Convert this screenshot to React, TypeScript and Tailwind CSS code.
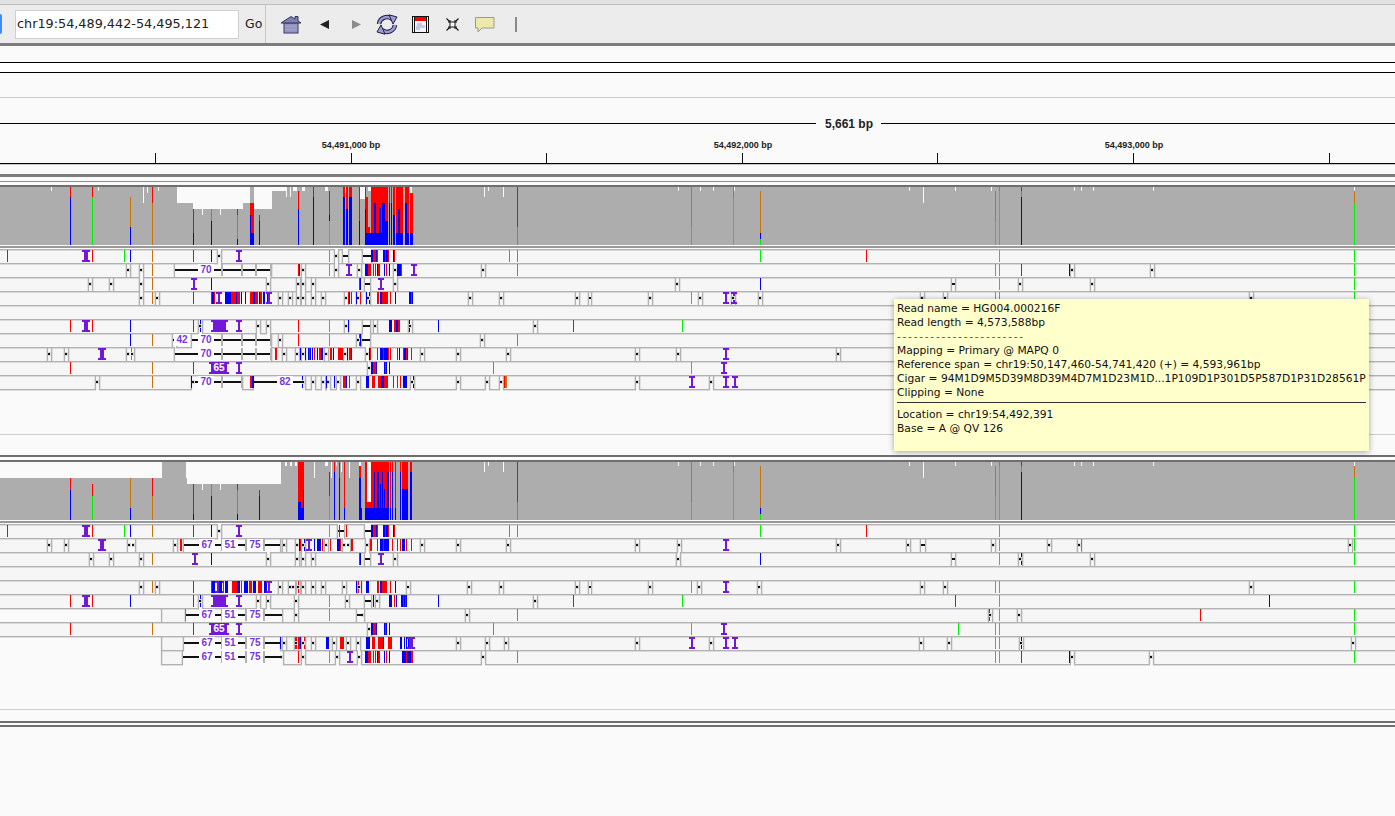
const COLORS: Record<string, string> = {
  r: "#ff0000",
  b: "#0000ff",
  g: "#00f000",
  o: "#c8720a",
  w: "#fafafa",
};
const PURPLE = "#7318d8";
const BOX = "#b2b2b2";

type Row = { marks: string; labels?: [number, string][] };

// ---- read rows, one string per row: r/b/g/o tick, d deletion dot, l black line,
// i/I insertion, P filled insertion, | gray bar, S read start
const panel1Rows: Row[] = [
  { marks: "r7 I86 r92 g124 b130 o152 r193 b211 d219 i239 g329 d336 l343-348 l363-371 b371-373 r373-376 b376-377 r377-378 b383-385 r385-386 b386-388 r388-389 b393-394 r394-395 o509 o517 g760 r866 g999 g1354" },
  { marks: "d128 d141 o152 l175-271 |221 |241 |255 |270 r298 b299 d303 g329 d336 i349 d359 b365-368 r368-371 r373 r375 b377 r378-380 b384 r386 b389 d395 b397-401 r401 i414 d483 o517 g995 g999 r1021 b1069 d1072 d1152 g1354", labels: [[206, "70"]] },
  { marks: "d90 d111 d141 o152 i194 b211 d268 d298 d303 d313 r359 b360 l365-370 i381 r381 d395 d677 b760 l952-955 g999 d1020 d1092 g1354" },
  { marks: "d141 o152 d157 r193 r211 b212-214 r214 i219 b225-231 r231-236 b236 r237-240 b241-242 b245-246 r250-253 b253-255 r255-258 b259-260 r260-262 b263 b264-265 b267 i269 d280 d290 d298 d303 d313 d323 d346 r348 b349-350 r351 b356 d358 r360 b366-367 d368 b369 r377-379 b380-382 r382-385 b385-386 r386-388 r390 b395 b409-411 r411-412 b412-413 d470 d501 d577 l589-591 d650 g691 d700 i726 d733 o733 i734 d760 d922 d945 g995 g999 d1251 g1354" },
  { marks: "" },
  { marks: "r70 I86 r92 b130 r193 d200 b200 P211-228 i239 d258 d268 r298 g329 d346 b348 l363-370 d375 b389-392 r394-396 b396-398 r398-400 b409 d410 b438 d535 r573 g682" },
  { marks: "b130 o152 d174 l192-271 |221 |241 |255 |270 d280 r298 g329 d358 r359 b360 l362-370 d482 o517", labels: [[182, "42"], [206, "70"]] },
  { marks: "d49 d66 I102 d128 d132 o131 l175-271 |221 |241 |255 |270 r275-277 d284 d297 b300 d303 b305 b308 r309 b310 b312 r314 b317-318 r319-321 b321-323 d326 r330-332 b333 r338-343 d345 b347 r349-351 b351 d367 b369 r370-371 r377 b380-383 r383-384 b384-388 r388-389 r390 r397 b399 r403 b404-406 r406 b407-408 r411 d422 d458 d508 d637 d678 i726 d838", labels: [[206, "70"]] },
  { marks: "r70 o152 r193 P209-229 i239 d369 b371-373 r373-376 b376-377 b384 r385 b386 b389 o493 g691 i724", labels: [] },
  { marks: "d97 o152 b191 d193 l195-242 |221 |241 r250-252 b252-254 l254-302 b302 d303 d313 d323 b326 d328 b334 d338 r343-346 b346 r349 d358 b366-369 r372-375 r378-381 b381-384 r384-388 r393 r397 r400 b403-407 d412 b413 d458 d487 d501 r504 o505-507 d637 g691 i692 d711 i726 i735 r735", labels: [[206, "70"], [285, "82"]] },
];

const panel2Rows: Row[] = [
  { marks: "r7 I86 r92 g124 b130 o152 r193 b211 d219 i239 g329 l338-344 r339 r346 l365-371 b371-373 r373-376 b376-377 r377-378 b383-385 r385-386 b386-388 r388-389 b393-394 r394-395 o509 o517 g760 r866 g999 g1354" },
  { marks: "d49 d66 I102 d129 d133 d175 r180-182 l184-280 |221 |245 |263 d284 d297 b299-300 r300-301 d303 b304-305 i309 r309 b314 b317-321 r322 d326 r330 b337-340 r340 d344 d348 r351-353 d367 r370-372 r377 b380-383 r383-384 b384-389 r392 r397 r400 b402-405 r406-407 r411 d422 d458 d508 d637 d679 i726 d838 d908 l921-925 d993 g999 d1049 d1079 o1081 d1350 g1354", labels: [[207, "67"], [230, "51"], [255, "75"]] },
  { marks: "d91 d111 d141 o152 i195 r195 b211 d268 d297 d303 d313 r359 b360 l365-370 i381 d395 d678 b760 l952-955 g999 d1020 b1021 d1092 g1354" },
  { marks: "" },
  { marks: "d141 o152 d157 r193 r211 b212-215 I219 b219-222 r223 b225-228 r232-237 b237-240 r241 b244-248 r249-252 b253-256 r258-262 b264-267 i269 d280 d290 d293 r298 d298 d303 d313 d323 d344 b356 r358 d359 r361 b366-369 r377-379 b380-382 r382-387 r390 b395 d408 d469 d501 d577 l589-591 d650 g691 d699 i726 d759 d922 d945 g995 g999 d1251 g1354" },
  { marks: "r70 I86 r92 b130 r193 d200 b200 P211-228 i239 d258 d268 d296 g329 d347 l365-371 b373 d377 b389-392 r394 b396 b401-407 r403 r405 b438 d535 r573 g682 r955 g999 b1269" },
  { marks: "S161 o185 l186-282 |221 |245 |263 d296 g329 l357-361 d362 d467 o517 r989 d990 g999 d1019 r1200 g1354", labels: [[207, "67"], [230, "51"], [255, "75"]] },
  { marks: "r70 o152 r193 P209-229 i239 d369 b371-373 r373-376 b376-377 b384 r385 b386 b389 o493 g691 i724 g958 g995 g999 g1354" },
  { marks: "S161 l184-280 |221 |245 |263 b280 d284 r295-297 d296 r298-300 b300 d303 r304 d313 b326-329 d334 r340-344 d348 d358 b366-370 r372-375 r378-383 b383 r388-392 b400-402 b404 b406 b408 I411 d458 d487 d506 d637 i692 d711 i726 i735 d921 d949 g995 g999 b1021 d1021 d1353", labels: [[207, "67"], [230, "51"], [255, "75"]] },
  { marks: "S161 l183-280 |221 |245 |263 d281 r298 d303 g329 d337 i350 d359 b365-368 r368-371 r373 r375 b377 r378-380 b384 r386 b389 b402-406 r406 b407-411 r411-413 d483 o517 g995 g999 r1021 b1069 d1072 d1151 g1354", labels: [[207, "67"], [230, "51"], [255, "75"]] },
];

// ---- coverage columns: "x[-x2] c<y0>[-y1] ...", a segment without y1 runs to the next one
const sharedCoverage = [
  "70 r186 b196", "92 r186 g196", "51 w186-190", "98 w186-190", "143 w186-202", "147 w186-192", "158 w186-190",
  "202 w208-214", "220 w208-214", "517 r186 o226", "691 o186 g226", "733 o186 g196", "760 o190 b232 g238",
  "484 w186-196", "488 w186-190", "503 w186-196", "678 w186-190", "700 w186-190", "713 w186-190", "734 w186-190",
  "909 w186-190", "923 w186-202", "955 w186-190", "991 w186-190", "995 o190 g220", "999 o186 g190", "1021 r186 o190 b196",
  "1074 w186-190", "1081 w186-190", "1093 w186-190", "1153 w186-190", "1354 w186-190 o190 g202",
];

const cover1 = [
  ...sharedCoverage,
  "177-193 w186-202", "193-243 w186-208", "243-250 w186-202", "254-272 w186-208", "272-286 w186-190", "286-287 w186-196",
  "290-291 w186-196", "293-297 w186-190", "302-305 w186-190", "325-328 w186-190",
  "130 o196 b226", "152 r186 o202", "193 r208 b232", "211 o208 b220", "237 r208 o214 b238",
  "250 r202 b214", "251-254 r202 b232", "250-254 b232", "259 r214 b220", "298 r190 b208", "313 r186 b196", "329 r190 b214 g220",
  "343-345 r186 b196", "345-346 w186-192", "346-348 r186 b208", "349-352 r186 b196", "351-352 b220",
  "359 r186 b220", "360-365 w186-198", "365-366 r186 b208", "366-368 r196 b232", "368-371 w186-190", "368-370 r226-232", "368-371 b232",
  "371-374 r186 b232", "374-376 r186 b202", "376-379 r186 b232", "379-381 r186 b207", "381-382 r186 b232", "382-385 r186 b202",
  "385-388 r186 b220", "389 r186 b202", "391 r186 b202", "393-395 r186 b214", "396-398 r186 b232", "398-400 r186 b208",
  "400-403 r186 b232", "405-407 r186 b202", "407-409 r186 b232", "410-412 w186-192", "410-413 r192 b232",
];

const cover2 = [
  ...sharedCoverage.filter((c) => !c.startsWith("70 ") && !c.startsWith("92 ")),
  "70 r202 b214", "92 r208 g220",
  "0-162 w186-202", "186-187 w186-202", "187-281 w186-208", "285-287 w186-190", "290-292 w186-190", "295-297 w186-190", "314 w186-202",
  "325-328 w186-190", "331 w186-202", "336 w186-190", "341 w186-196",
  "130 o202 b232", "152 r202 o220", "193 r208 b238", "211 o208 b220", "237 r208 o214 b238", "259 r214 b220",
  "298-301 r186 b226", "301-303 r186 b232", "303 r186 b214", "329 r196 g220", "334 r186 b196", "339 r186 b202",
  "344 r186 b232", "349 w186-202", "359-361 w186-190 r190 b202", "361-362 b232", "365-367 r186 b232", "367-371 w186-226 r226 b232",
  "371-374 r186 b232", "374-375 r186 b196", "375-377 r186 b232", "377-379 r186 b196", "379-380 r186 b232", "380-381 r186 b208",
  "381-382 r186 b232", "382-383 r186 b196", "383-384 r186 b232", "384-385 r186 b213", "385-387 r186 b232", "387-389 r186 b196",
  "390 r186 b232", "392 r186 b196", "395 r186 b232", "400 r186 b196", "402-408 r186 b213", "410-412 r186 b196",
];

function parseCoverage(col: string) {
  const [head, ...segs] = col.split(" ");
  const [a, b] = head.split("-").map(Number);
  const w = b ? b - a : 1;
  return segs.map((s, i) => {
    const [y0, y1] = s.slice(1).split("-").map(Number);
    const next = segs[i + 1] ? Number(segs[i + 1].slice(1).split("-")[0]) : 244;
    return { x: a, w, c: s[0], y0, y1: y1 ?? next };
  });
}

function Coverage({ cols, shift }: { cols: string[]; shift: number }) {
  return (
    <g shapeRendering="crispEdges">
      <rect x={0} y={186 + shift} width={1395} height={58} fill="#adadad" />
      {cols.flatMap(parseCoverage).map((s, i) => (
        <rect key={i} x={s.x} y={s.y0 + shift} width={s.w} height={s.y1 - s.y0} fill={COLORS[s.c]} />
      ))}
    </g>
  );
}

function Insertion({ x, y, wide }: { x: number; y: number; wide?: boolean }) {
  const sw = wide ? 4 : 2;
  const w = wide ? 8 : 6;
  return (
    <>
      <rect x={x - w / 2} y={y} width={w} height={2} fill={PURPLE} />
      <rect x={x - sw / 2} y={y} width={sw} height={12} fill={PURPLE} />
      <rect x={x - w / 2} y={y + 10} width={w} height={2} fill={PURPLE} />
    </>
  );
}

function ReadRow({ row, y }: { row: Row; y: number }) {
  const tokens = row.marks.split(" ").filter(Boolean).map((t) => {
    const [a, b] = t.slice(1).split("-").map(Number);
    return { k: t[0], a, b };
  });
  const start = tokens.find((t) => t.k === "S")?.a ?? -4;
  const breaks = tokens
    .filter((t) => t.k === "d" || t.k === "l")
    .map((t) => (t.k === "d" ? [t.a - 1, t.a + 2] : [t.a, t.b]))
    .sort((p, q) => p[0] - q[0]);

  const boxes: number[][] = [];
  let from = start;
  for (const [p, q] of breaks) {
    if (p > from) boxes.push([from, p]);
    from = Math.max(from, q);
  }
  boxes.push([from, 1400]);

  return (
    <g>
      {boxes.map(([p, q]) => (
        <rect key={p} x={p + 0.6} y={y - 0.3} width={q - p - 1.2} height={14} fill="#f6f6f6" stroke={BOX} strokeWidth={1.4} />
      ))}
      <g shapeRendering="crispEdges">
        {tokens.map((t, i) => {
          if (t.k === "l") return <rect key={i} x={t.a} y={y + 5} width={t.b - t.a} height={2} fill="#111" />;
          if (t.k === "|") return <rect key={i} x={t.a} y={y} width={2} height={12} fill={BOX} />;
          if (t.k === "i") return <Insertion key={i} x={t.a} y={y} />;
          if (t.k === "I") return <Insertion key={i} x={t.a} y={y} wide />;
          if (t.k === "P")
            return (
              <g key={i}>
                <rect x={t.a} y={y} width={t.b - t.a} height={2} fill={PURPLE} />
                <rect x={t.a + 2} y={y} width={t.b - t.a - 4} height={12} fill={PURPLE} />
                <rect x={t.a} y={y + 10} width={t.b - t.a} height={2} fill={PURPLE} />
              </g>
            );
          if (t.k === "d") return null;
          if (t.k === "S") return null;
          return <rect key={i} x={t.a} y={y} width={t.b ? t.b - t.a : 1} height={12} fill={COLORS[t.k]} />;
        })}
        {tokens.filter((t) => t.k === "d").map((t, i) => (
          <g key={i}>
            <rect x={t.a - 1} y={y + 4} width={3} height={4} fill="#d8d8d8" />
            <rect x={t.a - 1} y={y + 5} width={2} height={2} fill="#111" />
          </g>
        ))}
        {row.labels?.map(([x, text]) => (
          <g key={x}>
            <rect x={x - 8} y={y} width={16} height={12} fill="#ffffff" />
            <text x={x} y={y + 9} textAnchor="middle" fontSize={10} fontWeight={700} fontFamily="Liberation Sans" fill="#7a35e0">
              {text}
            </text>
          </g>
        ))}
        {row.marks.includes("P209-229") && (
          <text x={219} y={y + 9} textAnchor="middle" fontSize={10} fontWeight={700} fontFamily="Liberation Sans" fill="#ffffff">
            65
          </text>
        )}
      </g>
    </g>
  );
}

function TrackPanel({ rows, cols, top }: { rows: Row[]; cols: string[]; top: number }) {
  const shift = top - 186;
  return (
    <svg className="block" width={1395} height={204} viewBox={`0 ${top} 1395 204`}>
      <Coverage cols={cols} shift={shift} />
      <rect x={0} y={top + 59} width={1395} height={2} fill="#999999" shapeRendering="crispEdges" />
      {rows.map((row, i) => (
        <ReadRow key={i} row={row} y={top + 63 + i * 14} />
      ))}
    </svg>
  );
}

function Ruler() {
  const ticks = [155, 351, 546, 742, 937, 1133, 1329];
  const labels = [
    [351, "54,491,000 bp"],
    [743, "54,492,000 bp"],
    [1134, "54,493,000 bp"],
  ] as const;
  return (
    <svg className="block" width={1395} height={28} viewBox="0 135 1395 28">
      {labels.map(([x, t]) => (
        <text key={t} x={x} y={148} textAnchor="middle" fontSize={9} fontWeight={700} fontFamily="Liberation Sans" fill="#222">
          {t}
        </text>
      ))}
      {ticks.map((x) => (
        <rect key={x} x={x} y={153} width={1} height={10} fill="#111" shapeRendering="crispEdges" />
      ))}
    </svg>
  );
}

function HomeIcon() {
  return (
    <svg width={22} height={19} viewBox="0 0 22 19">
      <rect x={4} y={8} width={14} height={10} fill="#a3a3cc" stroke="#34345f" />
      <path d="M1 8 L11 1.5 L15 4 V1.5 H18 V6 L21 8 Z" fill="#7f7fb0" stroke="#34345f" />
      <path d="M5 10h12M5 13h12M5 16h12" stroke="#8787b5" />
    </svg>
  );
}

function RefreshIcon() {
  const top = "M3 10 A8 8 0 0 1 16 5";
  const bottom = "M19 11 A8 8 0 0 1 6 16";
  return (
    <svg width={22} height={21} viewBox="0 0 22 21">
      <path d={top} fill="none" stroke="#1f1f40" strokeWidth={4.5} />
      <path d={bottom} fill="none" stroke="#1f1f40" strokeWidth={4.5} />
      <path d={top} fill="none" stroke="#9d9dd6" strokeWidth={2.5} />
      <path d={bottom} fill="none" stroke="#9d9dd6" strokeWidth={2.5} />
      <path d="M13 0.8 L21 3 L17 10 Z" fill="#9d9dd6" stroke="#1f1f40" />
      <path d="M9 20.2 L1 18 L5 11 Z" fill="#9d9dd6" stroke="#1f1f40" />
    </svg>
  );
}

function RegionIcon() {
  return (
    <svg width={17} height={17} viewBox="0 0 17 17" shapeRendering="crispEdges">
      <rect x={0.5} y={0.5} width={16} height={16} fill="#f4f4fb" stroke="#111" />
      <rect x={3} y={1} width={11} height={4} fill="#ff0000" />
      <rect x={2} y={1} width={1} height={15} fill="#111" />
      <rect x={14} y={1} width={1} height={15} fill="#111" />
      <path d="M5 7h5v2h3v3H8v2H4z" fill="#c4c8ee" />
      <path d="M7 8h3v1H7z" fill="#eeb4b8" />
    </svg>
  );
}

function FitIcon() {
  return (
    <svg width={13} height={13} viewBox="0 0 13 13">
      <rect x={4} y={4} width={5} height={5} fill="#fff" stroke="#111" />
      <path d="M0.5 0.5 L3.5 3.5M12.5 0.5 L9.5 3.5M0.5 12.5 L3.5 9.5M12.5 12.5 L9.5 9.5" stroke="#111" strokeWidth={1.1} />
      <path d="M2 4h2v-2M11 4h-2v-2M2 9h2v2M11 9h-2v2" stroke="#111" fill="none" />
    </svg>
  );
}

function BubbleIcon() {
  return (
    <svg width={20} height={16} viewBox="0 0 20 16">
      <path d="M0.5 0.5 H19 V11 H7 L3 15 V11 H0.5 Z" fill="#efe8ab" stroke="#9a9a90" />
    </svg>
  );
}

function Toolbar() {
  return (
    <div className="flex h-[38px] items-center bg-[#ececec] [font-family:'DejaVu_Sans',sans-serif]">
      <div className="h-[20px] w-[2px] rounded-r bg-[#3f8cf5]" />
      <div className="ml-[13px] flex h-[29px] w-[224px] items-center border border-[#cfcfcf] bg-white pl-[1px] text-[12.8px] text-[#222]">
        chr19:54,489,442-54,495,121
      </div>
      <span className="ml-[6px] w-[20px] text-[12.5px] text-[#222]">Go</span>
      <div className="h-full w-px bg-[#c8c8c8]" />
      <div className="ml-[14px] flex items-center">
        <HomeIcon />
        <svg className="ml-[18px]" width={9} height={9} viewBox="0 0 9 9">
          <path d="M0 4.5 L9 0 V9 Z" fill="#222" />
        </svg>
        <svg className="ml-[23px]" width={9} height={9} viewBox="0 0 9 9">
          <path d="M9 4.5 L0 0 V9 Z" fill="#8c8c8c" />
        </svg>
        <div className="ml-[15px]">
          <RefreshIcon />
        </div>
        <div className="ml-[14px]">
          <RegionIcon />
        </div>
        <div className="ml-[17px]">
          <FitIcon />
        </div>
        <div className="ml-[16px] pt-[2px]">
          <BubbleIcon />
        </div>
        <div className="ml-[20px] h-[15px] w-[2px] bg-[#8a8a8a]" />
      </div>
    </div>
  );
}

function Tooltip() {
  const before = [
    "Read name = HG004.000216F",
    "Read length = 4,573,588bp",
    "Mapping = Primary @ MAPQ 0",
    "Reference span = chr19:50,147,460-54,741,420 (+) = 4,593,961bp",
    "Cigar = 94M1D9M5D39M8D39M4D7M1D23M1D...1P109D1P301D5P587D1P31D28561P",
    "Clipping = None",
  ];
  return (
    <div className="absolute left-[894px] top-[299px] h-[152px] w-[475px] bg-[#ffffcc] px-[3px] pt-[3px] text-[10.7px] leading-[14px] text-[#111] shadow-[0_1px_6px_rgba(0,0,0,0.35)] [font-family:'DejaVu_Sans',sans-serif]">
      {before.slice(0, 2).map((line) => (
        <div key={line} className="h-[14px] whitespace-nowrap">
          {line}
        </div>
      ))}
      <div className="h-[14px] whitespace-nowrap tracking-[1.7px] text-[#555]">-----------------------</div>
      {before.slice(2).map((line) => (
        <div key={line} className="h-[14px] whitespace-nowrap">
          {line}
        </div>
      ))}
      <div className="mb-[5px] mt-[2px] h-px bg-[#333]" />
      <div className="h-[14px]">Location = chr19:54,492,391</div>
      <div className="h-[14px]">Base = A @ QV 126</div>
    </div>
  );
}

export default function App() {
  return (
    <div className="relative h-[816px] w-[1395px] overflow-hidden bg-[#fafafa]">
      <div className="h-[4px] bg-[#e2e2e2]" />
      <div className="h-px bg-[#bdbdbd]" />
      <Toolbar />
      <div className="h-[3px] bg-[#7c7c7c]" />

      {/* ruler stack */}
      <div className="h-[17px] border-b border-black" />
      <div className="h-[10px] border-b border-black bg-white" />
      <div className="h-[25px] border-b border-[#cccccc]" />
      <div className="h-[14px]" />
      <div className="flex h-[23px] items-center">
        <div className="h-px flex-1 bg-black" />
        <span className="pl-[9px] pr-[8px] pt-[1px] text-[12px] font-bold text-[#222] [font-family:'Liberation_Sans',sans-serif]">5,661 bp</span>
        <div className="h-px w-[514px] bg-black" />
      </div>
      <Ruler />
      <div className="h-px bg-black" />
      <div className="h-px bg-[#c8c8c8]" />

      <div className="h-[9px]" />
      <div className="h-[3px] bg-[#7c7c7c]" />
      <div className="h-[4px]" />
      <div className="h-px bg-[#8c8c8c]" />
      <div className="h-[3px]" />
      <div className="h-[2px] bg-[#6f6f6f]" />

      <TrackPanel rows={panel1Rows} cols={cover1} top={186} />

      <div className="h-[44px] border-b border-[#cccccc]" />
      <div className="h-[20px]" />
      <div className="h-[2px] bg-[#6f6f6f]" />
      <div className="h-[3px]" />
      <div className="h-[2px] bg-[#6f6f6f]" />

      <TrackPanel rows={panel2Rows} cols={cover2} top={461} />

      <div className="h-[44px] border-b border-[#cccccc]" />
      <div className="h-[11px]" />
      <div className="h-[2px] bg-[#6f6f6f]" />
      <div className="h-[2px]" />
      <div className="h-[2px] bg-[#6f6f6f]" />

      <Tooltip />
    </div>
  );
}
